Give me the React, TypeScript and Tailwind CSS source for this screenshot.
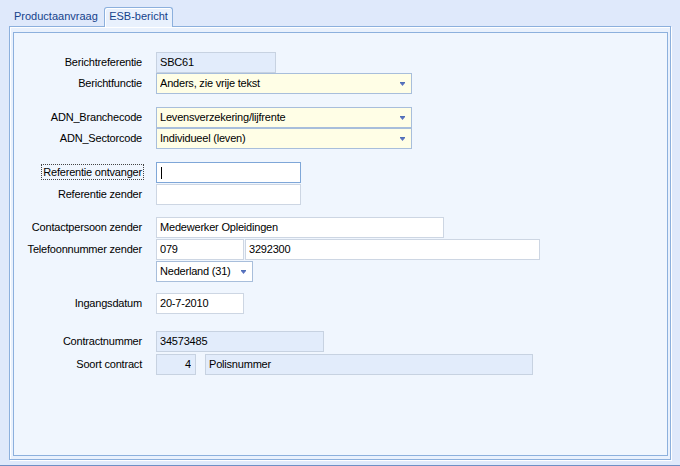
import React from 'react';

type Tone = 'readonly' | 'combo' | 'plain' | 'focus' | 'drop';

const FIELD_CLASS: Record<Tone, string> = {
  readonly: 'bg-[#e2ecfb] border-[#c7d2e1]',
  combo: 'bg-[#fffee6] border-[#a8bedb]',
  plain: 'bg-white border-[#cdd6e3]',
  focus: 'bg-white border-[#7fa7d8]',
  drop: 'bg-white border-[#a8bedb]'
};

const Arrow = () => (
  <svg width="5" height="4" viewBox="0 0 5 4" className="shrink-0 mr-[2px]">
    <rect x="0" y="0" width="5" height="1" fill="#4f6fb6" />
    <path d="M0 1h5l-2.5 3z" fill="#5a72c0" />
  </svg>
);

const Field: React.FC<{
  w: string;
  tone: Tone;
  text?: string;
  arrow?: boolean;
  right?: boolean;
  cursor?: boolean;
}> = ({ w, tone, text, arrow, right, cursor }) => (
  <div className={`${w} h-full border flex items-center pl-[3px] pr-[4px] ${FIELD_CLASS[tone]}`}>
    {cursor && <span className="block w-px h-[12px] bg-black ml-px" />}
    {text && (
      <span className={`flex-1 truncate whitespace-nowrap ${right ? 'text-right' : ''}`}>{text}</span>
    )}
    {arrow && <Arrow />}
  </div>
);

const Row: React.FC<{ label?: string; mt: string; focusLabel?: boolean; children: React.ReactNode }> = ({
  label,
  mt,
  focusLabel,
  children
}) => (
  <div className={`flex items-center h-[21px] ${mt}`}>
    <div className="w-[129px] shrink-0 text-right pr-px whitespace-nowrap">
      {label &&
        (focusLabel ? (
          <span className="outline outline-1 outline-dotted outline-[#444] outline-offset-1">{label}</span>
        ) : (
          label
        ))}
    </div>
    <div className="ml-[13px] flex h-full gap-px">{children}</div>
  </div>
);

export default function App() {
  return (
    <div
      className="w-[680px] h-[466px] bg-[#dfe9fb] border-b border-[#6f8fc4] flex flex-col text-[11px] tracking-[-0.2px] text-black overflow-hidden"
      style={{ fontFamily: '"Liberation Sans", Arial, sans-serif' }}
    >
      {/* tab strip */}
      <div className="h-[26px] flex items-end pl-[9px] shrink-0 tracking-normal">
        <div className="w-[95px] h-[19px] pl-[5px] text-[#15428b] flex items-center">Productaanvraag</div>
        <div className="relative z-10 -mb-px w-[69px] h-[20px] border border-b-0 border-[#8cb0dd] rounded-t-[3px] bg-[#e9f1fd] shadow-[inset_1px_1px_0_#fff] text-[#15428b] flex items-center justify-center pb-[3px]">
          ESB-bericht
        </div>
      </div>
      <div className="ml-[9px] w-[662px] h-[434px] border border-[#8cb0dd] bg-[#e9f1fd] shadow-[inset_1px_1px_0_#fff,1px_1px_0_#fff] pl-[3px] pt-[5px] pr-[2px] pb-[3px] flex flex-col">
        <div className="flex-1 border border-[#8cb0dd] bg-[#f0f6fe] pt-[19px] flex flex-col">
          <Row label="Berichtreferentie" mt="mt-0">
            <Field w="w-[120px]" tone="readonly" text="SBC61" />
          </Row>
          <Row label="Berichtfunctie" mt="mt-0">
            <Field w="w-[256px]" tone="combo" text="Anders, zie vrije tekst" arrow />
          </Row>
          <Row label="ADN_Branchecode" mt="mt-[13px]">
            <Field w="w-[256px]" tone="combo" text="Levensverzekering/lijfrente" arrow />
          </Row>
          <Row label="ADN_Sectorcode" mt="mt-0">
            <Field w="w-[256px]" tone="combo" text="Individueel (leven)" arrow />
          </Row>
          <Row label="Referentie ontvanger" mt="mt-[13px]" focusLabel>
            <Field w="w-[145px]" tone="focus" cursor />
          </Row>
          <Row label="Referentie zender" mt="mt-px">
            <Field w="w-[145px]" tone="plain" />
          </Row>
          <Row label="Contactpersoon zender" mt="mt-[12px]">
            <Field w="w-[288px]" tone="plain" text="Medewerker Opleidingen" />
          </Row>
          <Row label="Telefoonnummer zender" mt="mt-px">
            <Field w="w-[88px]" tone="plain" text="079" />
            <Field w="w-[295px]" tone="plain" text="3292300" />
          </Row>
          <Row mt="mt-px">
            <Field w="w-[97px]" tone="drop" text="Nederland (31)" arrow />
          </Row>
          <Row label="Ingangsdatum" mt="mt-[11px]">
            <Field w="w-[88px]" tone="plain" text="20-7-2010" />
          </Row>
          <Row label="Contractnummer" mt="mt-[17px]">
            <Field w="w-[168px]" tone="readonly" text="34573485" />
          </Row>
          <Row label="Soort contract" mt="mt-[2px]">
            <Field w="w-[40px]" tone="readonly" text="4" right />
            <div className="w-[7px]" />
            <Field w="w-[328px]" tone="readonly" text="Polisnummer" />
          </Row>
        </div>
      </div>
    </div>
  );
}
